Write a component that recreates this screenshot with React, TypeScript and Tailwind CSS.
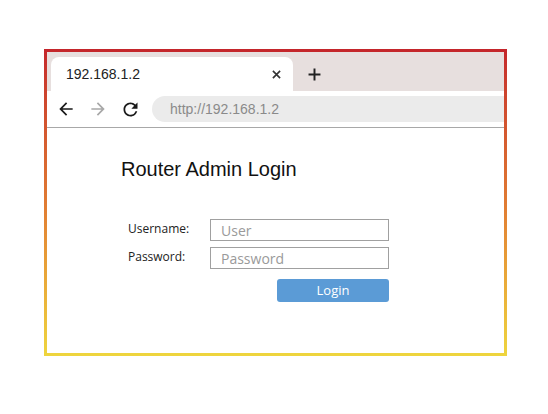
import React from 'react';

const sans = { fontFamily: '"Liberation Sans", Arial, sans-serif' };

function BackIcon({ className }: { className?: string }) {
  return (
    <svg viewBox="0 0 24 24" className={className} fill="currentColor">
      <path d="M20 11H7.83l5.59-5.59L12 4l-8 8 8 8 1.41-1.41L7.83 13H20v-2z" />
    </svg>
  );
}

function ForwardIcon({ className }: { className?: string }) {
  return (
    <svg viewBox="0 0 24 24" className={className} fill="currentColor">
      <path d="M4 11h12.17l-5.59-5.59L12 4l8 8-8 8-1.41-1.41L16.17 13H4v-2z" />
    </svg>
  );
}

function ReloadIcon({ className }: { className?: string }) {
  return (
    <svg viewBox="0 0 24 24" className={className} fill="currentColor">
      <path d="M17.65 6.35A7.958 7.958 0 0 0 12 4c-4.42 0-7.99 3.58-7.99 8s3.57 8 7.99 8c3.73 0 6.84-2.55 7.73-6h-2.08A5.99 5.99 0 0 1 12 18c-3.31 0-6-2.69-6-6s2.69-6 6-6c1.66 0 3.14.69 4.22 1.78L13 11h7V4l-2.35 2.35z" />
    </svg>
  );
}

export default function App() {
  return (
    <div className="w-[548px] h-[414px] bg-white pt-[49px] pl-[44px]" style={sans}>
      <div className="w-[463px] h-[307px] p-[3px] bg-linear-to-b from-[#c4252b] via-[#e07a32] to-[#eed53e]">
        <div className="w-full h-full bg-white flex flex-col">
          {/* tab strip */}
          <div className="h-[39px] bg-[#e7dfde] pt-[5px] pl-[4px] flex items-end">
            <div className="w-[242px] h-[34px] bg-white rounded-t-[8px] flex items-center pl-[15px] pr-[12px]">
              <span className="text-[14px] text-[#222]">192.168.1.2</span>
              <svg viewBox="0 0 10 10" className="ml-auto w-[9px] h-[9px] text-[#333]">
                <path d="M1 1L9 9M9 1L1 9" stroke="currentColor" strokeWidth="1.8" />
              </svg>
            </div>
            <div className="h-[34px] flex items-center ml-[15px]">
              <svg viewBox="0 0 12 12" className="w-[13px] h-[13px] text-[#222]">
                <path d="M6 0.5V11.5M0.5 6H11.5" stroke="currentColor" strokeWidth="1.8" />
              </svg>
            </div>
          </div>
          {/* address row */}
          <div className="h-[37px] flex items-center border-b border-[#a8a8a8]">
            <div className="flex items-center gap-[10px] pl-[9px]">
              <BackIcon className="w-[20px] h-[20px] text-[#1a1a1a]" />
              <ForwardIcon className="w-[20px] h-[20px] text-[#a8a8a8] ml-[2px]" />
              <ReloadIcon className="w-[21px] h-[21px] text-[#1a1a1a] ml-[2px]" />
            </div>
            <div className="ml-[11px] flex-1 h-[26px] bg-[#ebebeb] rounded-l-full flex items-center pl-[18px]">
              <span className="text-[14px] text-[#8a8a8a]">http://192.168.1.2</span>
            </div>
          </div>
          {/* page */}
          <div className="pl-[74px] pt-[31px]">
            <h1 className="text-[20px] leading-[20px] text-[#111]">Router Admin Login</h1>
          </div>
          <div className="pl-[81px] mt-[40px]" style={{ fontFamily: '"Open Sans", "Noto Sans", sans-serif' }}>
            <div className="grid grid-cols-[82px_179px] gap-y-[6px] items-center">
              <label className="text-[12px] text-[#222] -mt-[2px]">Username:</label>
              <div className="h-[22px] border border-[#a0a0a0] flex items-center pl-[10px] text-[14px] text-[#9a9a9a]">User</div>
              <label className="text-[12px] text-[#222] -mt-[2px]">Password:</label>
              <div className="h-[22px] border border-[#a0a0a0] flex items-center pl-[10px] text-[14px] text-[#9a9a9a]">Password</div>
            </div>
            <div className="w-[261px] flex justify-end mt-[10px]">
              <button className="w-[112px] h-[23px] rounded-[3px] bg-[#5b9bd6] text-white text-[13px] flex items-center justify-center">
                Login
              </button>
            </div>
          </div>
        </div>
      </div>
    </div>
  );
}
